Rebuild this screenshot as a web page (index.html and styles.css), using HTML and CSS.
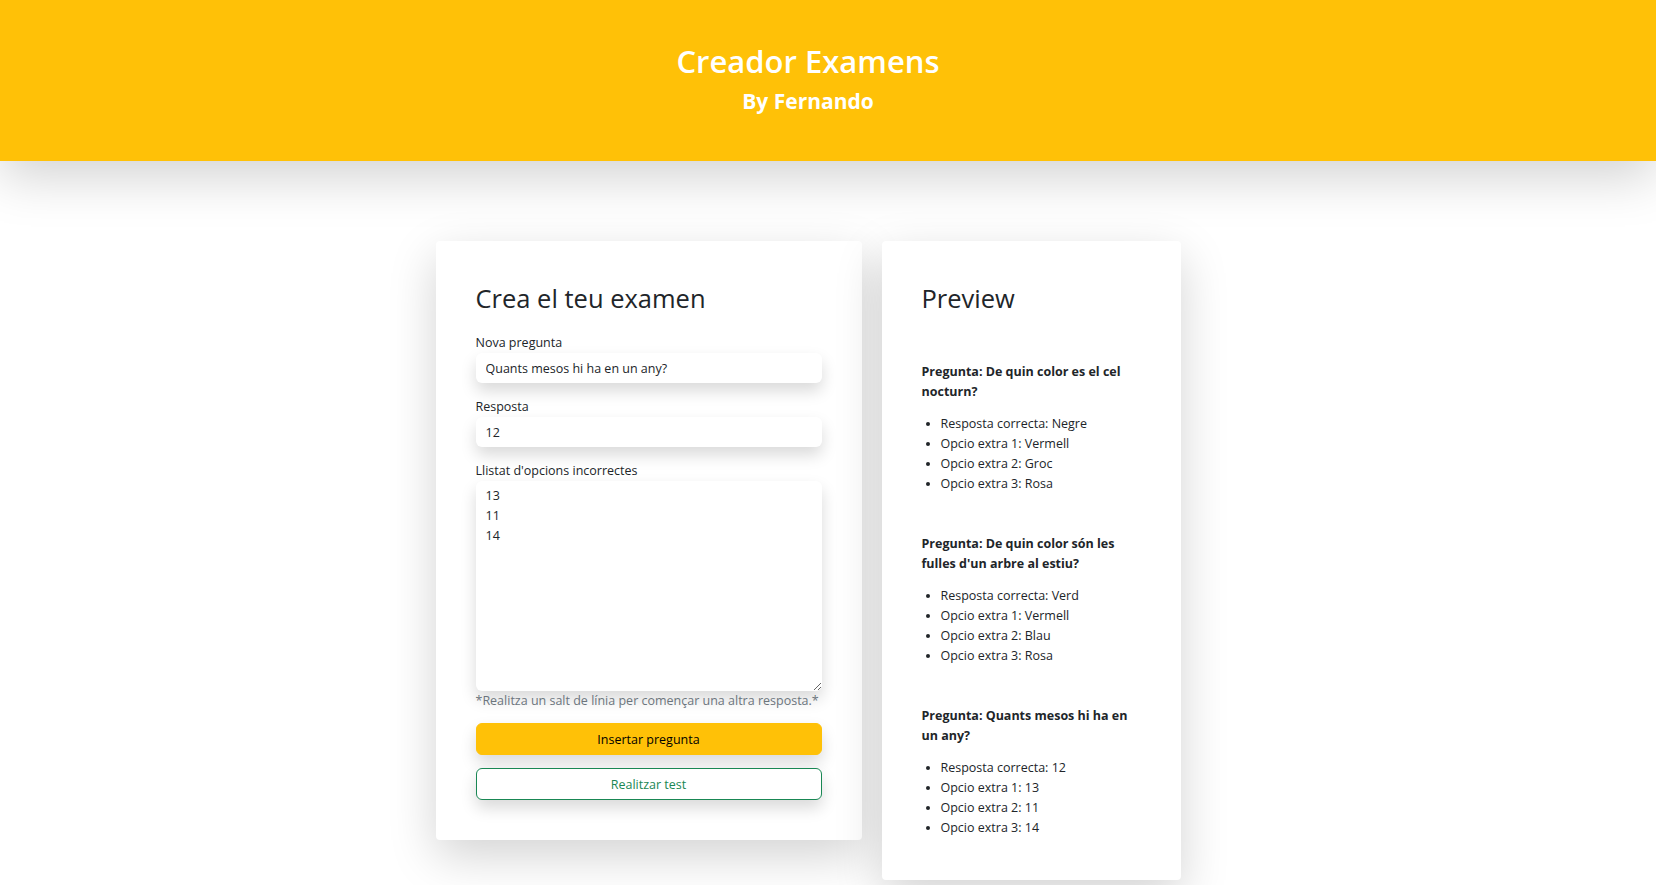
FILE: index.html
```html
<!DOCTYPE html>
<html lang="ca">
<head>
<meta charset="utf-8">
<title>Creador Examens</title>
<link rel="stylesheet" href="styles.css">
</head>
<body>
<header class="hero">
  <h1 class="hero-title">Creador Examens</h1>
  <p class="hero-sub">By Fernando</p>
</header>
<main class="layout">
  <section class="card card-form">
    <h2 class="card-title">Crea el teu examen</h2>
    <form class="form">
      <label class="field-label" for="q">Nova pregunta</label>
      <input class="field" id="q" type="text" value="Quants mesos hi ha en un any?">
      <label class="field-label" for="a">Resposta</label>
      <input class="field" id="a" type="text" value="12">
      <label class="field-label" for="o">Llistat d'opcions incorrectes</label>
      <textarea class="field field-area" id="o">13
11
14</textarea>
      <p class="hint">*Realitza un salt de línia per començar una altra resposta.*</p>
      <button class="btn btn-warn" type="button">Insertar pregunta</button>
      <button class="btn btn-outline" type="button">Realitzar test</button>
    </form>
  </section>
  <section class="card card-preview">
    <h2 class="card-title">Preview</h2>
    <div class="questions">
      <div class="question">
        <p class="q-title">Pregunta: De quin color es el cel nocturn?</p>
        <ul class="q-list">
          <li>Resposta correcta: Negre</li>
          <li>Opcio extra 1: Vermell</li>
          <li>Opcio extra 2: Groc</li>
          <li>Opcio extra 3: Rosa</li>
        </ul>
      </div>
      <div class="question">
        <p class="q-title">Pregunta: De quin color són les fulles d'un arbre al estiu?</p>
        <ul class="q-list">
          <li>Resposta correcta: Verd</li>
          <li>Opcio extra 1: Vermell</li>
          <li>Opcio extra 2: Blau</li>
          <li>Opcio extra 3: Rosa</li>
        </ul>
      </div>
      <div class="question">
        <p class="q-title">Pregunta: Quants mesos hi ha en un any?</p>
        <ul class="q-list">
          <li>Resposta correcta: 12</li>
          <li>Opcio extra 1: 13</li>
          <li>Opcio extra 2: 11</li>
          <li>Opcio extra 3: 14</li>
        </ul>
      </div>
    </div>
  </section>
</main>
</body>
</html>
```

FILE: styles.css
```css
* { box-sizing: border-box; }

body {
  margin: 0;
  font-family: "Open Sans", "Noto Sans", sans-serif;
  font-size: 12.5px;
  line-height: 20px;
  color: #212529;
  background: #fff;
}

.hero {
  height: 161px;
  background: #ffc107;
  color: #fff;
  text-align: center;
  padding: 38px 40px 0 0;
  box-shadow: 0 1rem 3rem rgba(0, 0, 0, .175);
  position: relative;
  z-index: 1;
}

.hero-title {
  margin: 0;
  font-size: 31px;
  font-weight: 600;
  line-height: 47px;
}

.hero-sub {
  margin: 0;
  font-size: 21px;
  font-weight: 700;
  line-height: 32px;
}

.layout {
  display: flex;
  justify-content: center;
  align-items: flex-start;
  gap: 20px;
  padding: 80px 40px 40px 0;
}

.card {
  background: #fff;
  border-radius: 4px;
  box-shadow: 0 1rem 3rem rgba(0, 0, 0, .175);
  padding: 40px 40px 40px;
}

.card-form { width: 426px; }
.card-preview { width: 299px; padding-bottom: 42px; }

.card-title {
  margin: 0;
  font-size: 25.5px;
  font-weight: 500;
  line-height: 34px;
}

.form {
  display: flex;
  flex-direction: column;
  margin-top: 18px;
}

.field-label {
  display: block;
  line-height: 20px;
}

.field {
  display: block;
  width: 100%;
  border: none;
  border-radius: 6px;
  background: #fff;
  box-shadow: 0 .5rem 1rem rgba(0, 0, 0, .15);
  font-family: inherit;
  font-size: 12.5px;
  color: #212529;
  height: 30px;
  padding: 4px 10px;
  margin-bottom: 14px;
  outline: none;
}

.field-area {
  height: 210px;
  line-height: 20px;
  padding: 5px 10px;
  margin-bottom: 0;
  resize: vertical;
}

.hint {
  margin: 0 0 12px;
  color: #6c757d;
  line-height: 20px;
  white-space: nowrap;
}

.btn {
  display: block;
  width: 100%;
  height: 32px;
  border-radius: 6px;
  font-family: inherit;
  font-size: 12.5px;
  cursor: pointer;
  box-shadow: 0 .5rem 1rem rgba(0, 0, 0, .15);
}

.btn-warn {
  background: #ffc107;
  border: 1px solid #ffc107;
  color: #000;
  margin-bottom: 13px;
}

.btn-outline {
  background: #fff;
  border: 1px solid #198754;
  color: #198754;
}

.questions {
  display: flex;
  flex-direction: column;
  gap: 40px;
  margin-top: 47px;
}

.q-title {
  margin: 0 0 12px;
  font-weight: 700;
}

.q-list {
  margin: 0;
  padding-left: 19px;
}
```
